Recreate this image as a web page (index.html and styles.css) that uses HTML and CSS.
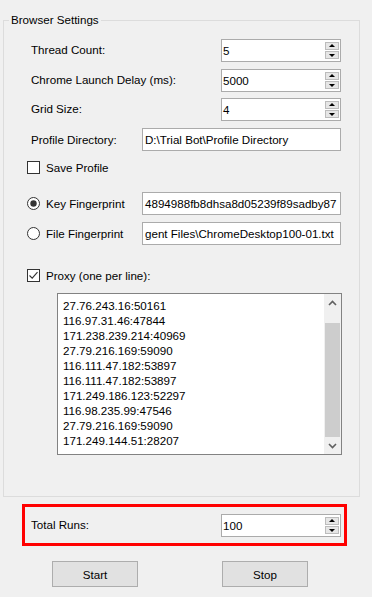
FILE: index.html
```html
<!DOCTYPE html>
<html>
	<head>
	<meta charset="utf-8">
	<link rel="stylesheet" href="styles.css">
	</head>

	<body>
		<div class="window">

			<div class="group">
				<span class="group-title">Browser Settings</span>

				<div class="row row-thread">
					<span class="label">Thread Count:</span>
					<div class="spinbox">
						<span class="value">5</span>
						<div class="spin"><span class="spin-btn up"></span><span class="spin-btn down"></span></div>
					</div>
				</div>

				<div class="row row-delay">
					<span class="label">Chrome Launch Delay (ms):</span>
					<div class="spinbox">
						<span class="value">5000</span>
						<div class="spin"><span class="spin-btn up"></span><span class="spin-btn down"></span></div>
					</div>
				</div>

				<div class="row row-grid">
					<span class="label">Grid Size:</span>
					<div class="spinbox">
						<span class="value">4</span>
						<div class="spin"><span class="spin-btn up"></span><span class="spin-btn down"></span></div>
					</div>
				</div>

				<div class="row row-profile">
					<span class="label label-short">Profile Directory:</span>
					<div class="textbox">D:\Trial Bot\Profile Directory</div>
				</div>

				<div class="row row-save option">
					<svg class="box" width="13" height="13" viewBox="0 0 13 13">
						<rect x="0.5" y="0.5" width="12" height="12" fill="#fff" stroke="#333"/>
					</svg>
					<span>Save Profile</span>
				</div>

				<div class="row row-key option">
					<svg class="box" width="13" height="13" viewBox="0 0 13 13">
						<circle cx="6.5" cy="6.5" r="6" fill="#fff" stroke="#333"/>
						<circle cx="6.5" cy="6.5" r="3.2" fill="#333"/>
					</svg>
					<span class="choice-label">Key Fingerprint</span>
					<div class="textbox">4894988fb8dhsa8d05239f89sadby87</div>
				</div>

				<div class="row row-file option">
					<svg class="box" width="13" height="13" viewBox="0 0 13 13">
						<circle cx="6.5" cy="6.5" r="6" fill="#fff" stroke="#333"/>
					</svg>
					<span class="choice-label">File Fingerprint</span>
					<div class="textbox">gent Files\ChromeDesktop100-01.txt</div>
				</div>

				<div class="row row-proxy option">
					<svg class="box" width="13" height="13" viewBox="0 0 13 13">
						<rect x="0.5" y="0.5" width="12" height="12" fill="#fff" stroke="#333"/>
						<polyline points="2.5,6.5 5.2,9.2 10.5,3.2" fill="none" stroke="#333" stroke-width="1.1"/>
					</svg>
					<span>Proxy (one per line):</span>
				</div>

				<div class="proxy-list">
					<div class="lines">
						<div>27.76.243.16:50161</div>
						<div>116.97.31.46:47844</div>
						<div>171.238.239.214:40969</div>
						<div>27.79.216.169:59090</div>
						<div>116.111.47.182:53897</div>
						<div>116.111.47.182:53897</div>
						<div>171.249.186.123:52297</div>
						<div>116.98.235.99:47546</div>
						<div>27.79.216.169:59090</div>
						<div>171.249.144.51:28207</div>
					</div>
					<div class="scrollbar">
						<div class="arrow">
							<svg width="9" height="6" viewBox="0 0 9 6"><polyline points="1,5 4.5,1.5 8,5" fill="none" stroke="#606060" stroke-width="1.6"/></svg>
						</div>
						<div class="track"><div class="thumb"></div></div>
						<div class="arrow">
							<svg width="9" height="6" viewBox="0 0 9 6"><polyline points="1,1 4.5,4.5 8,1" fill="none" stroke="#606060" stroke-width="1.6"/></svg>
						</div>
					</div>
				</div>
			</div>

			<div class="runs">
				<span class="label">Total Runs:</span>
				<div class="spinbox">
					<span class="value">100</span>
					<div class="spin"><span class="spin-btn up"></span><span class="spin-btn down"></span></div>
				</div>
			</div>

			<div class="actions">
				<button class="btn">Start</button>
				<button class="btn">Stop</button>
			</div>

		</div>
	</body>
</html>
```

FILE: styles.css
```css
body {
	margin: 0;
	padding: 0;
	background: #f0f0f0;
	font-family: "Liberation Sans", Arial, sans-serif;
	font-size: 11.6px;
	color: #000;
}

.window {
	width: 372px;
	height: 597px;
	overflow: hidden;
}

/* group box */
.group {
	position: relative;
	box-sizing: border-box;
	width: 357px;
	height: 477px;
	margin: 20px 0 0 3px;
	border: 1px solid #dcdcdc;
}

.group-title {
	position: absolute;
	top: -9px;
	left: 5px;
	padding: 0 2px;
	background: #f0f0f0;
	line-height: 16px;
}

.row {
	display: flex;
	align-items: center;
	height: 23px;
	padding-left: 27px;
}

.label {
	width: 190px;
	margin-bottom: 2px;
	white-space: nowrap;
}

.label-short {
	width: 111px;
	margin-bottom: 1px;
}

.row-thread { margin-top: 18px; }
.row-delay { margin-top: 7px; }
.row-grid { margin-top: 6px; }
.row-profile { margin-top: 7px; }

.option {
	padding-left: 23px;
}

.option .box {
	flex: none;
	margin-right: 6px;
}

.row-save { margin-top: 10px; height: 13px; }
.row-key { margin-top: 18px; }
.row-file { margin-top: 7px; }
.row-proxy { margin-top: 24px; height: 13px; }

.choice-label {
	width: 96px;
	white-space: nowrap;
}

/* inputs */
.spinbox {
	box-sizing: border-box;
	display: flex;
	width: 120px;
	height: 23px;
	border: 1px solid #ababab;
	background: #fff;
}

.spinbox .value {
	flex: 1;
	padding-left: 1px;
	line-height: 22px;
}

.spin {
	display: flex;
	flex-direction: column;
	gap: 1px;
	padding: 2px 1px 1px 0;
}

.spin-btn {
	position: relative;
	box-sizing: border-box;
	width: 14px;
	height: 8px;
	border: 1px solid #bcbcbc;
	background: #e6e6e6;
}

.spin-btn::after {
	content: "";
	position: absolute;
	left: 3px;
	width: 0;
	height: 0;
	border-left: 3px solid transparent;
	border-right: 3px solid transparent;
}

.spin-btn.up::after {
	top: 1px;
	border-bottom: 3px solid #000;
}

.spin-btn.down::after {
	top: 2px;
	border-top: 3px solid #000;
}

.textbox {
	box-sizing: border-box;
	width: 199px;
	height: 23px;
	padding: 0 2px;
	border: 1px solid #ababab;
	background: #fff;
	line-height: 21px;
	white-space: nowrap;
	overflow: hidden;
}

/* proxy list */
.proxy-list {
	box-sizing: border-box;
	display: flex;
	width: 285px;
	height: 162px;
	margin: 11px 0 0 53px;
	border: 1px solid #828282;
	background: #fff;
}

.lines {
	flex: 1;
	padding: 4px 0 0 5px;
	line-height: 15px;
	white-space: nowrap;
	overflow: hidden;
}

.scrollbar {
	display: flex;
	flex-direction: column;
	width: 17px;
	background: #f0f0f0;
}

.arrow {
	display: flex;
	align-items: center;
	justify-content: center;
	height: 17px;
}

.track {
	flex: 1;
	display: flex;
	flex-direction: column;
	justify-content: flex-end;
}

.thumb {
	height: 114px;
	margin: 0 1px;
	background: #cdcdcd;
}

/* total runs */
.runs {
	box-sizing: border-box;
	display: flex;
	align-items: center;
	width: 325px;
	height: 42px;
	margin: 7px 0 0 22px;
	padding-left: 6px;
	border: 3px solid #ff0000;
}

/* buttons */
.actions {
	display: flex;
	gap: 84px;
	margin-top: 15px;
	padding-left: 52px;
}

.btn {
	box-sizing: border-box;
	width: 86px;
	height: 26px;
	padding: 0;
	border: 1px solid #adadad;
	background: #e1e1e1;
	font-family: "Liberation Sans", Arial, sans-serif;
	font-size: 11.6px;
	color: #000;
}
```
